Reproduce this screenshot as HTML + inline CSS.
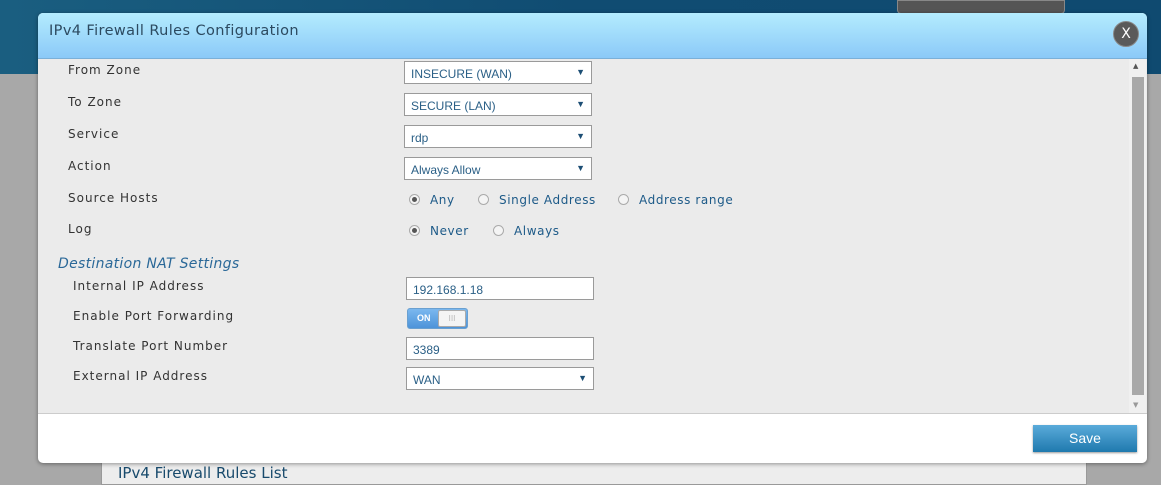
<!DOCTYPE html>
<html><head><style>
*{box-sizing:border-box;margin:0;padding:0}
body{width:1161px;height:478px;overflow:hidden;background:#a8a8a8;font-family:"DejaVu Sans","Liberation Sans",sans-serif;position:relative}
.top{position:absolute;left:0;top:0;width:1161px;height:74px;background:linear-gradient(90deg,#1a5e80,#104c72 50%,#0f4a70)}
.sysbtn{position:absolute;left:897px;top:0;width:168px;height:14px;background:#555;border:1px solid #888;border-radius:0 0 4px 4px}
.under{position:absolute;left:101px;top:455px;width:986px;height:30px;background:#ededed;border:1px solid #999}
.under span{position:absolute;left:16px;top:8px;font-size:15px;color:#184a6c}
.modal{position:absolute;left:38px;top:13px;width:1109px;height:450px;background:#fff;border-radius:5px;box-shadow:0 1px 4px rgba(0,0,0,.4);overflow:hidden}
.hd{height:46px;background:linear-gradient(#b4ecfe,#8bc9f8);border-bottom:1px solid #7bb0d8;position:relative}
.hd h1{position:absolute;left:11px;top:10px;font-size:14.5px;font-weight:normal;color:#2c4a60;letter-spacing:.4px}
.x{position:absolute;left:1075px;top:8px;width:26px;height:26px;border-radius:50%;background:#5a5a5a;color:#fff;font-size:14px;text-align:center;line-height:25px;border:1px solid #888}
.bd{position:absolute;left:0;top:46px;width:1109px;height:355px;background:#ebebeb;border-bottom:1px solid #ccc}
.l{position:absolute;font-size:12px;color:#333;letter-spacing:1px}
.sel,.inp{position:absolute;width:188px;height:23px;background:#fff;border:1px solid #9a9a9a;font-family:"Liberation Sans",sans-serif;font-size:12px;color:#2a5f86;padding:5px 6px}
.sel:after{content:"▼";position:absolute;right:6px;top:5px;font-size:9px;color:#1d4f75}
.r{position:absolute;font-size:12px;color:#1d5a88;letter-spacing:.6px}
.r i{display:inline-block;width:11px;height:11px;border-radius:50%;border:1px solid #aaa;background:#f4f4f4;vertical-align:-1px;margin-right:10px;position:relative}
.r i.on:after{content:"";position:absolute;left:2px;top:2px;width:5px;height:5px;border-radius:50%;background:#555}
.h2{position:absolute;left:20px;top:197px;font-size:14px;font-style:italic;color:#2a6898;letter-spacing:.3px}
.tog{position:absolute;left:369px;top:249px;width:61px;height:21px;border-radius:3px;background:linear-gradient(#7bb8ef,#4d93d9);border:1px solid #6aa0d0}
.tog b{position:absolute;left:9px;top:4px;font-size:9px;color:#fff;font-family:"Liberation Sans",sans-serif}
.tog s{position:absolute;left:30px;top:1px;width:28px;height:17px;background:#f4f4f4;border:1px solid #aaa;border-radius:2px;text-decoration:none;font-size:8px;color:#bbb;text-align:center;line-height:15px}
.sb{position:absolute;left:1091px;top:0;width:17px;height:354px;background:#f0f0f0}
.sb .th{position:absolute;left:3px;top:18px;width:12px;height:318px;background:#a8a8a8}
.save{position:absolute;left:995px;top:412px;width:104px;height:27px;background:linear-gradient(#5aabda,#1f79ae);color:#fff;font-size:14px;text-align:center;line-height:27px;box-shadow:0 1px 2px rgba(0,0,0,.4);font-family:"Liberation Sans",sans-serif}
</style></head><body>
<div class="top"></div><div class="sysbtn"></div>
<div class="under"><span>IPv4 Firewall Rules List</span></div>
<div class="modal">
<div class="hd"><h1>IPv4 Firewall Rules Configuration</h1><div class="x">X</div></div>
<div class="bd">
<div class="l" style="left:30px;top:4px">From Zone</div>
<div class="sel" style="left:366px;top:2px">INSECURE (WAN)</div>
<div class="l" style="left:30px;top:36px">To Zone</div>
<div class="sel" style="left:366px;top:34px">SECURE (LAN)</div>
<div class="l" style="left:30px;top:68px">Service</div>
<div class="sel" style="left:366px;top:66px">rdp</div>
<div class="l" style="left:30px;top:100px">Action</div>
<div class="sel" style="left:366px;top:98px">Always Allow</div>
<div class="l" style="left:30px;top:132px">Source Hosts</div>
<div class="r" style="left:371px;top:134px"><i class="on"></i>Any</div>
<div class="r" style="left:440px;top:134px"><i></i>Single Address</div>
<div class="r" style="left:580px;top:134px"><i></i>Address range</div>
<div class="l" style="left:30px;top:163px">Log</div>
<div class="r" style="left:371px;top:165px"><i class="on"></i>Never</div>
<div class="r" style="left:455px;top:165px"><i></i>Always</div>
<div class="h2">Destination NAT Settings</div>
<div class="l" style="left:35px;top:220px">Internal IP Address</div>
<div class="inp" style="left:368px;top:218px">192.168.1.18</div>
<div class="l" style="left:35px;top:250px">Enable Port Forwarding</div>
<div class="tog"><b>ON</b><s>III</s></div>
<div class="l" style="left:35px;top:280px">Translate Port Number</div>
<div class="inp" style="left:368px;top:278px">3389</div>
<div class="l" style="left:35px;top:310px">External IP Address</div>
<div class="sel" style="left:368px;top:308px">WAN</div>
<div class="sb"><div style="position:absolute;left:4px;top:3px;font-size:7px;color:#555">▲</div><div class="th"></div><div style="position:absolute;left:4px;top:342px;font-size:7px;color:#999">▼</div></div>
</div>
<div class="save">Save</div>
</div>
</body></html>
